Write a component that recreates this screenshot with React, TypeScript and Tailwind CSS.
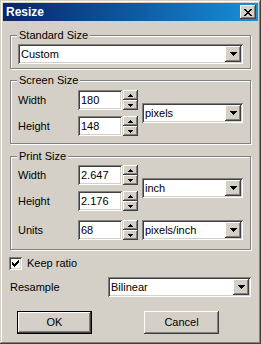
import React from 'react';

const sunken =
  'shadow-[inset_1px_1px_#808080,inset_-1px_-1px_#ffffff,inset_2px_2px_#404040,inset_-2px_-2px_#d4d0c8]';
const raised =
  'shadow-[inset_-1px_-1px_#404040,inset_1px_1px_#ffffff,inset_-2px_-2px_#808080,inset_2px_2px_#d4d0c8]';

// pixel bitmaps for tiny glyphs
function Pixels({ rows, color = '#000' }: { rows: string[]; color?: string }) {
  const w = rows[0].length;
  const h = rows.length;
  return (
    <svg width={w} height={h} viewBox={`0 0 ${w} ${h}`} shapeRendering="crispEdges">
      {rows.flatMap((r, y) =>
        r.split('').map((c, x) => (c === 'x' ? <rect key={`${x}-${y}`} x={x} y={y} width={1} height={1} fill={color} /> : null))
      )}
    </svg>
  );
}

const closeX = ['xx....xx', '.xx..xx.', '..xxxx..', '...xx...', '..xxxx..', '.xx..xx.', 'xx....xx'];
const check = ['......x', '.....xx', 'x...xxx', 'xx.xxx.', 'xxxxx..', '.xxx...', '..x....'];
const down7 = ['xxxxxxx', '.xxxxx.', '..xxx..', '...x...'];
const up5 = ['..x..', '.xxx.', 'xxxxx'];
const dn5 = ['xxxxx', '.xxx.', '..x..'];

function Combo({ value, className = '' }: { value: string; className?: string }) {
  return (
    <div className={`h-[20px] bg-white flex items-center pl-[3px] ${sunken} ${className}`}>
      <span className="flex-1 leading-none">{value}</span>
      <div className={`w-[16px] h-[16px] mr-[2px] bg-[#d4d0c8] flex items-center justify-center ${raised}`}>
        <Pixels rows={down7} />
      </div>
    </div>
  );
}

function Spin({ value }: { value: string }) {
  return (
    <div className="flex items-center">
      <div className={`w-[44px] h-[20px] bg-white flex items-center pl-[3px] ${sunken}`}>{value}</div>
      <div className="ml-[1px] w-[15px] h-[20px] flex flex-col">
        <div className={`h-[10px] bg-[#d4d0c8] flex items-center justify-center ${raised}`}>
          <Pixels rows={up5} />
        </div>
        <div className={`h-[10px] bg-[#d4d0c8] flex items-center justify-center ${raised}`}>
          <Pixels rows={dn5} />
        </div>
      </div>
    </div>
  );
}

function Row({ label, value }: { label: string; value: string }) {
  return (
    <div className="flex items-center">
      <span className="w-[60px]">{label}</span>
      <Spin value={value} />
    </div>
  );
}

function Group({ label, className, children }: { label: string; className: string; children: React.ReactNode }) {
  return (
    <div className={`relative border border-[#808080] shadow-[inset_1px_1px_#ffffff,1px_1px_#ffffff] ${className}`}>
      <span className="absolute -top-[8px] left-[6px] px-[2px] bg-[#d4d0c8] leading-[14px]">{label}</span>
      {children}
    </div>
  );
}

export default function App() {
  return (
    <div
      className="w-[261px] h-[344px] bg-[#d4d0c8] p-[3px] flex flex-col text-[11px] text-black shadow-[inset_-1px_-1px_#404040,inset_1px_1px_#d4d0c8,inset_-2px_-2px_#808080,inset_2px_2px_#ffffff]"
      style={{ fontFamily: '"Liberation Sans", Arial, sans-serif' }}
    >
      {/* Title bar */}
      <div className="h-[18px] flex items-center pl-[3px] bg-gradient-to-r from-[#0a246a] to-[#1890d8]">
        <span className="flex-1 text-white font-bold text-[12px]">Resize</span>
        <div className={`w-[16px] h-[14px] mr-[2px] bg-[#d4d0c8] flex items-center justify-center ${raised}`}>
          <Pixels rows={closeX} />
        </div>
      </div>

      {/* Body */}
      <div className="px-[7px] flex flex-col">
        <Group label="Standard Size" className="mt-[14px] pt-[8px] pb-[4px] px-[7px]">
          <Combo value="Custom" />
        </Group>

        <Group label="Screen Size" className="mt-[11px] pt-[9px] pb-[7px] px-[7px]">
          <div className="flex items-center">
            <div className="flex flex-col gap-[6px]">
              <Row label="Width" value="180" />
              <Row label="Height" value="148" />
            </div>
            <Combo value="pixels" className="ml-[4px] flex-1" />
          </div>
        </Group>

        <Group label="Print Size" className="mt-[12px] pt-[8px] pb-[9px] px-[7px]">
          <div className="flex items-center">
            <div className="flex flex-col gap-[6px]">
              <Row label="Width" value="2.647" />
              <Row label="Height" value="2.176" />
            </div>
            <Combo value="inch" className="ml-[4px] flex-1" />
          </div>
          <div className="flex items-center mt-[9px]">
            <Row label="Units" value="68" />
            <Combo value="pixels/inch" className="ml-[4px] flex-1" />
          </div>
        </Group>

        {/* Keep ratio */}
        <div className="mt-[7px] -ml-[1px] flex items-center h-[13px]">
          <div className={`w-[13px] h-[13px] bg-white flex items-center justify-center ${sunken}`}>
            <Pixels rows={check} />
          </div>
          <span className="ml-[5px]">Keep ratio</span>
        </div>

        {/* Resample */}
        <div className="mt-[7px] flex items-center">
          <span className="w-[98px]">Resample</span>
          <Combo value="Bilinear" className="flex-1" />
        </div>

        {/* Buttons */}
        <div className="mt-[14px] flex">
          <div className="ml-[7px] w-[75px] h-[23px] border border-black">
            <div className={`w-full h-full flex items-center justify-center ${raised}`}>OK</div>
          </div>
          <div className={`ml-[52px] w-[75px] h-[23px] flex items-center justify-center ${raised}`}>Cancel</div>
        </div>
      </div>
    </div>
  );
}
